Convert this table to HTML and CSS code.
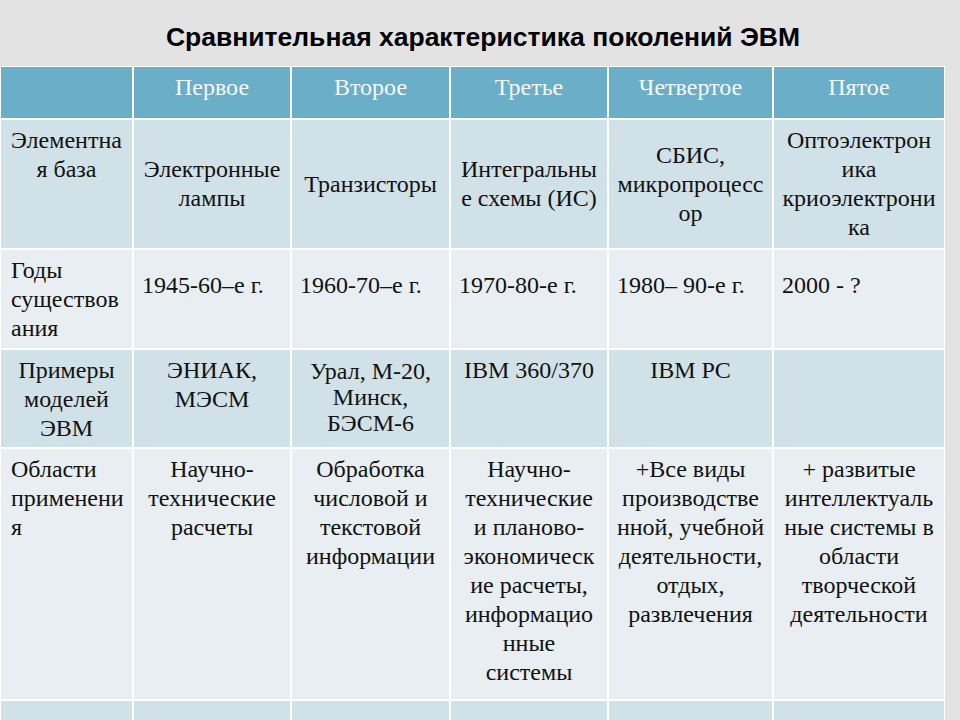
FILE: index.html
```html
<!DOCTYPE html>
<html lang="ru">
<head>
<meta charset="utf-8">
<title>Сравнительная характеристика поколений ЭВМ</title>
<link rel="stylesheet" href="styles.css">
</head>
<body>
<div class="slide">
  <h1 class="title">Сравнительная характеристика поколений ЭВМ</h1>
  <div class="table">
    <div class="cell hd"></div>
    <div class="cell hd">Первое</div>
    <div class="cell hd">Второе</div>
    <div class="cell hd">Третье</div>
    <div class="cell hd">Четвертое</div>
    <div class="cell hd">Пятое</div>

    <div class="cell odd c top">Элементна<br>я база</div>
    <div class="cell odd c mid">Электронные<br>лампы</div>
    <div class="cell odd c mid">Транзисторы</div>
    <div class="cell odd c mid">Интегральны<br>е схемы (ИС)</div>
    <div class="cell odd c mid">СБИС,<br>микропроцесс<br>ор</div>
    <div class="cell odd c mid">Оптоэлектрон<br>ика<br>криоэлектрони<br>ка</div>

    <div class="cell even l first top">Годы<br>существов<br>ания</div>
    <div class="cell even l low">1945-60–е г.</div>
    <div class="cell even l low">1960-70–е г.</div>
    <div class="cell even l low">1970-80-е г.</div>
    <div class="cell even l low">1980– 90-е г.</div>
    <div class="cell even l low">2000 - ?</div>

    <div class="cell odd c top">Примеры<br>моделей<br>ЭВМ</div>
    <div class="cell odd c top">ЭНИАК,<br>МЭСМ</div>
    <div class="cell odd c top tight">Урал, М-20,<br>Минск,<br>БЭСМ-6</div>
    <div class="cell odd c top">IBM 360/370</div>
    <div class="cell odd c top">IBM PC</div>
    <div class="cell odd c top"></div>

    <div class="cell even l first top">Области<br>применени<br>я</div>
    <div class="cell even c top">Научно-<br>технические<br>расчеты</div>
    <div class="cell even c top">Обработка<br>числовой и<br>текстовой<br>информации</div>
    <div class="cell even c top">Научно-<br>технические<br>и планово-<br>экономическ<br>ие расчеты,<br>информацио<br>нные<br>системы</div>
    <div class="cell even c top">+Все виды<br>производстве<br>нной, учебной<br>деятельности,<br>отдых,<br>развлечения</div>
    <div class="cell even c top">+ развитые<br>интеллектуаль<br>ные системы в<br>области<br>творческой<br>деятельности</div>

    <div class="cell odd"></div>
    <div class="cell odd"></div>
    <div class="cell odd"></div>
    <div class="cell odd"></div>
    <div class="cell odd"></div>
    <div class="cell odd"></div>
  </div>
</div>
</body>
</html>
```

FILE: styles.css
```css
html, body {
  margin: 0;
  padding: 0;
}

body {
  width: 960px;
  height: 720px;
  overflow: hidden;
  background: #e3e3e3;
}

.slide {
  width: 960px;
  height: 720px;
  overflow: hidden;
}

.title {
  margin: 0;
  height: 66px;
  box-sizing: border-box;
  padding-top: 24px;
  padding-left: 6px;
  font-family: "Liberation Sans", Arial, sans-serif;
  font-weight: bold;
  font-size: 26.5px;
  line-height: 26px;
  text-align: center;
  color: #000;
}

.table {
  display: grid;
  width: 945px;
  box-sizing: border-box;
  padding: 1px 1px 0 1px;
  background: #ffffff;
  grid-template-columns: 131px 156px 157px 156px 163px 170px;
  grid-template-rows: 51px 128px 98px 97px 250px 40px;
  gap: 2px;
  font-family: "Liberation Serif", "Times New Roman", serif;
  font-size: 24px;
  line-height: 29px;
  color: #111;
}

.cell {
  box-sizing: border-box;
  padding-left: 4px;
  padding-right: 4px;
  overflow: visible;
  white-space: nowrap;
}

.hd {
  background: #6aaec8;
  color: #f4f9fb;
  text-align: center;
  padding-top: 6px;
}

.odd {
  background: #d1e1e8;
}

.even {
  background: #e8eef2;
}

.c {
  text-align: center;
}

.l {
  text-align: left;
  padding-left: 8px;
}

.l.first {
  padding-left: 10px;
}

.top {
  padding-top: 6px;
}

.mid {
  display: flex;
  flex-direction: column;
  justify-content: center;
  align-items: center;
}

.low {
  padding-top: 21px;
}

.tight {
  line-height: 26px;
  padding-top: 8px;
}
```
